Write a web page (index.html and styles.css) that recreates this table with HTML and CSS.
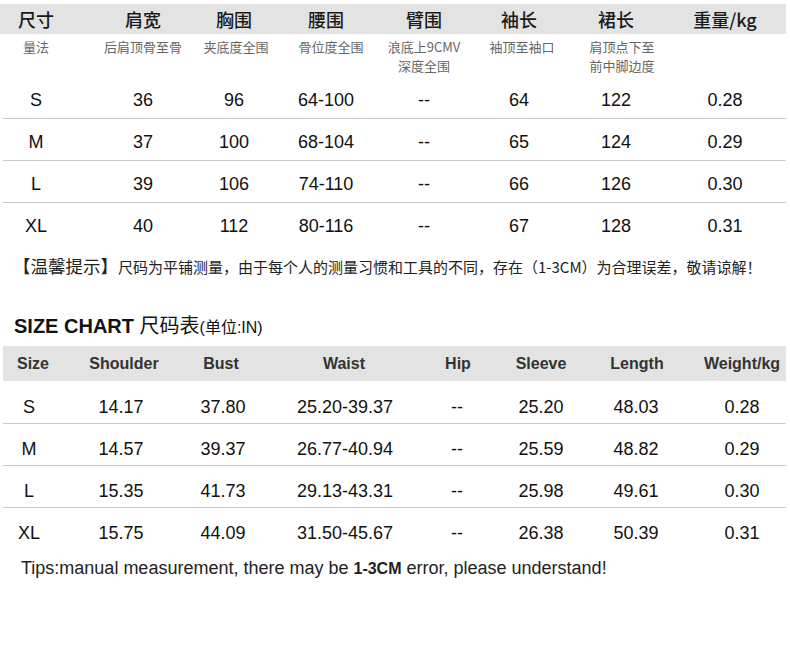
FILE: index.html
```html
<!DOCTYPE html>
<html lang="zh-CN">
<head>
<meta charset="utf-8">
<title>尺码表</title>
<link rel="stylesheet" href="styles.css">
</head>
<body>
<div class="page">
  <section class="cn">
    <div class="row head">
      <div class="c1">尺寸</div><div class="c2">肩宽</div><div class="c3">胸围</div><div class="c4">腰围</div>
      <div class="c5">臂围</div><div class="c6">袖长</div><div class="c7">裙长</div><div class="c8">重量/kg</div>
    </div>
    <div class="row sub">
      <div class="c1">量法</div><div class="c2">后肩顶骨至骨</div><div class="c3 s3">夹底度全围</div><div class="c4 s4">骨位度全围</div>
      <div class="c5 two"><span>浪底上9CMV</span><span>深度全围</span></div><div class="c6 s6">袖顶至袖口</div><div class="c7 s7 two"><span>肩顶点下至</span><span>前中脚边度</span></div><div class="c8"></div>
    </div>
    <div class="row data">
      <div class="c1">S</div><div class="c2">36</div><div class="c3">96</div><div class="c4">64-100</div>
      <div class="c5">--</div><div class="c6">64</div><div class="c7">122</div><div class="c8">0.28</div>
    </div>
    <div class="row data">
      <div class="c1">M</div><div class="c2">37</div><div class="c3">100</div><div class="c4">68-104</div>
      <div class="c5">--</div><div class="c6">65</div><div class="c7">124</div><div class="c8">0.29</div>
    </div>
    <div class="row data">
      <div class="c1">L</div><div class="c2">39</div><div class="c3">106</div><div class="c4">74-110</div>
      <div class="c5">--</div><div class="c6">66</div><div class="c7">126</div><div class="c8">0.30</div>
    </div>
    <div class="row data last">
      <div class="c1">XL</div><div class="c2">40</div><div class="c3">112</div><div class="c4">80-116</div>
      <div class="c5">--</div><div class="c6">67</div><div class="c7">128</div><div class="c8">0.31</div>
    </div>
    <p class="tip"><span class="tip-key">【温馨提示】</span>尺码为平铺测量，由于每个人的测量习惯和工具的不同，存在（1-3CM）为合理误差，敬请谅解！</p>
  </section>

  <section class="en">
    <h2 class="title"><b>SIZE CHART</b> 尺码表<span class="unit">(单位:IN)</span></h2>
    <div class="row head">
      <div class="c1 h1">Size</div><div class="c2 h2">Shoulder</div><div class="c3 h3">Bust</div><div class="c4 h4">Waist</div>
      <div class="c5 h5">Hip</div><div class="c6">Sleeve</div><div class="c7 h7">Length</div><div class="c8">Weight/kg</div>
    </div>
    <div class="row data">
      <div class="c1">S</div><div class="c2">14.17</div><div class="c3">37.80</div><div class="c4">25.20-39.37</div>
      <div class="c5">--</div><div class="c6">25.20</div><div class="c7">48.03</div><div class="c8">0.28</div>
    </div>
    <div class="row data">
      <div class="c1">M</div><div class="c2">14.57</div><div class="c3">39.37</div><div class="c4">26.77-40.94</div>
      <div class="c5">--</div><div class="c6">25.59</div><div class="c7">48.82</div><div class="c8">0.29</div>
    </div>
    <div class="row data">
      <div class="c1">L</div><div class="c2">15.35</div><div class="c3">41.73</div><div class="c4">29.13-43.31</div>
      <div class="c5">--</div><div class="c6">25.98</div><div class="c7">49.61</div><div class="c8">0.30</div>
    </div>
    <div class="row data last">
      <div class="c1">XL</div><div class="c2">15.75</div><div class="c3">44.09</div><div class="c4">31.50-45.67</div>
      <div class="c5">--</div><div class="c6">26.38</div><div class="c7">50.39</div><div class="c8">0.31</div>
    </div>
    <p class="tips">Tips:manual measurement, there may be <b>1-3CM</b> error, please understand!</p>
  </section>
</div>
</body>
</html>
```
FILE: styles.css
```css
* { box-sizing: border-box; }
html, body { margin: 0; padding: 0; background: #fff; }
body {
  width: 790px;
  height: 663px;
  overflow: hidden;
  font-family: "Liberation Sans", "Noto Sans CJK SC", sans-serif;
  color: #111;
}
.row {
  display: grid;
  width: 783px;
  margin-left: 3px;
  text-align: center;
  white-space: nowrap;
}
.c1 { grid-column: 1; }
.c2 { grid-column: 3; }
.c3 { grid-column: 5; }
.c4 { grid-column: 7; }
.c5 { grid-column: 9; }
.c6 { grid-column: 11; }
.c7 { grid-column: 13; }
.c8 { grid-column: 15; }

/* ---------- Chinese table ---------- */
.cn { padding-top: 4px; }
.cn .row {
  grid-template-columns: 66px 29px 90px 1px 90px 2px 90px 8px 90px 5px 90px 7px 90px 19px 90px;
}
.cn .head {
  width: 786px;
  margin-left: 0;
  padding-left: 3px;
  grid-template-columns: 66px 29px 90px 1px 90px 2px 90px 8px 90px 5px 90px 7px 90px 19px 90px 16px;
  height: 30px;
  line-height: 30px;
  background: #e3e3e3;
  font-family: "Noto Sans CJK SC", sans-serif;
  font-size: 18px;
  font-weight: 500;
  color: #1a1a1a;
}
.cn .sub {
  height: 43px;
  padding-top: 3px;
  line-height: 19px;
  font-family: "Noto Sans CJK SC", sans-serif;
  font-size: 13px;
  color: #666;
}
.cn .sub .two {
  display: flex;
  flex-direction: column;
  align-items: center;
}
.cn .sub .two span {
  display: block;
  height: 19px;
  line-height: 19px;
}
.cn .sub .s3 { padding-left: 4px; }
.cn .sub .s4 { padding-left: 10px; }
.cn .sub .s6 { padding-left: 6px; }
.cn .sub .s7 { padding-left: 12px; }
.data {
  height: 42px;
  padding-top: 6px;
  line-height: 35px;
  font-size: 18px;
  color: #111;
  border-bottom: 1px solid #c8c8c8;
}
.data.last { border-bottom: 0; }

.tip {
  margin: 0;
  padding-left: 13px;
  height: 42px;
  line-height: 42px;
  font-family: "Noto Sans CJK SC", sans-serif;
  font-size: 15px;
  color: #222;
  white-space: nowrap;
}
.tip-key { font-size: 17.5px; }

/* ---------- English table ---------- */
.title {
  margin: 24px 0 5px;
  padding-left: 14px;
  height: 30px;
  line-height: 30px;
  font-size: 20px;
  font-weight: 400;
  color: #111;
  white-space: nowrap;
}
.title b { font-weight: 700; }
.title .unit { font-size: 16px; }
.en .row {
  grid-template-columns: 52px 26px 80px 22px 80px 22px 120px 12px 80px 4px 80px 15px 80px 26px 80px;
}
.en .head {
  height: 35px;
  line-height: 35px;
  background: #e3e3e3;
  font-size: 16px;
  font-weight: 700;
  color: #333;
}
.en .head .h1 { padding-left: 8px; }
.en .head .h2 { padding-left: 6px; }
.en .head .h3 { padding-right: 4px; }
.en .head .h4 { padding-right: 2px; }
.en .head .h5 { padding-left: 2px; }
.en .head .h7 { padding-left: 2px; }
.en .data { padding-top: 8px; }
.en .head + .data { height: 43px; padding-top: 9px; }
.tips {
  margin: 0;
  padding-left: 21px;
  height: 36px;
  line-height: 36px;
  font-size: 18px;
  color: #222;
  white-space: nowrap;
}
.tips b { font-weight: 700; font-size: 16px; }
```
